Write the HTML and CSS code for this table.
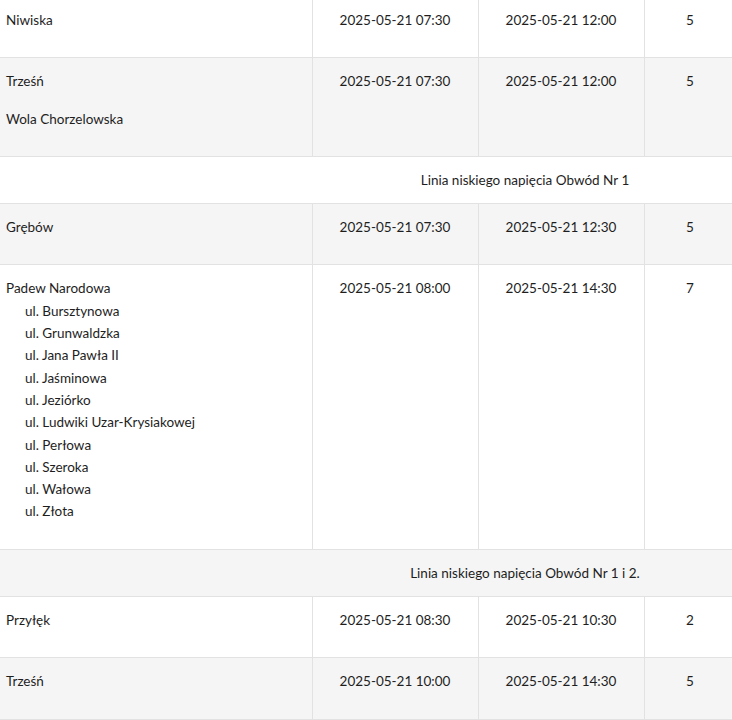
FILE: index.html
```html
<!DOCTYPE html>
<html lang="pl">
<head>
<meta charset="utf-8">
<title>Wyłączenia</title>
<link rel="stylesheet" href="styles.css">
</head>
<body>
<table class="outages">
  <colgroup>
    <col class="c-place">
    <col class="c-time">
    <col class="c-time">
    <col class="c-num">
    <col class="c-extra">
  </colgroup>
  <tbody>
    <tr class="row">
      <td class="place"><p>Niwiska</p></td>
      <td class="cell">2025-05-21 07:30</td>
      <td class="cell">2025-05-21 12:00</td>
      <td class="cell">5</td>
      <td class="cell"></td>
    </tr>
    <tr class="row alt">
      <td class="place"><p>Trześń</p><p>Wola Chorzelowska</p></td>
      <td class="cell">2025-05-21 07:30</td>
      <td class="cell">2025-05-21 12:00</td>
      <td class="cell">5</td>
      <td class="cell"></td>
    </tr>
    <tr class="row section">
      <td class="section-title" colspan="5">Linia niskiego napięcia Obwód Nr 1</td>
    </tr>
    <tr class="row alt">
      <td class="place"><p>Grębów</p></td>
      <td class="cell">2025-05-21 07:30</td>
      <td class="cell">2025-05-21 12:30</td>
      <td class="cell">5</td>
      <td class="cell"></td>
    </tr>
    <tr class="row">
      <td class="place">
        <p>Padew Narodowa
          <span class="street">ul. Bursztynowa</span>
          <span class="street">ul. Grunwaldzka</span>
          <span class="street">ul. Jana Pawła II</span>
          <span class="street">ul. Jaśminowa</span>
          <span class="street">ul. Jeziórko</span>
          <span class="street">ul. Ludwiki Uzar-Krysiakowej</span>
          <span class="street">ul. Perłowa</span>
          <span class="street">ul. Szeroka</span>
          <span class="street">ul. Wałowa</span>
          <span class="street">ul. Złota</span>
        </p>
      </td>
      <td class="cell">2025-05-21 08:00</td>
      <td class="cell">2025-05-21 14:30</td>
      <td class="cell">7</td>
      <td class="cell"></td>
    </tr>
    <tr class="row section alt">
      <td class="section-title" colspan="5">Linia niskiego napięcia Obwód Nr 1 i 2.</td>
    </tr>
    <tr class="row">
      <td class="place"><p>Przyłęk</p></td>
      <td class="cell">2025-05-21 08:30</td>
      <td class="cell">2025-05-21 10:30</td>
      <td class="cell">2</td>
      <td class="cell"></td>
    </tr>
    <tr class="row alt">
      <td class="place"><p>Trześń</p></td>
      <td class="cell">2025-05-21 10:00</td>
      <td class="cell">2025-05-21 14:30</td>
      <td class="cell">5</td>
      <td class="cell"></td>
    </tr>
  </tbody>
</table>
</body>
</html>
```

FILE: styles.css
```css
html, body {
  margin: 0;
  padding: 0;
  overflow: hidden;
  background: #ffffff;
}

body {
  font-family: Lato, "Open Sans", "Noto Sans", sans-serif;
  font-size: 13.5px;
  line-height: 22.3px;
  color: #1e1e1e;
}

.outages {
  width: 1050px;
  table-layout: fixed;
  border-collapse: collapse;
  margin-top: -4px;
}

.c-place { width: 312px; }
.c-time { width: 166px; }
.c-num { width: 92px; }
.c-extra { width: 314px; }

.row {
  background: #ffffff;
  border-top: 1px solid #e2e2e2;
  border-bottom: 1px solid #e2e2e2;
}

.row.alt {
  background: #f5f5f5;
}

.place,
.cell {
  vertical-align: top;
  padding: 12px 6px 11px;
  border-right: 1px solid #e2e2e2;
}

.cell {
  text-align: center;
}

.place p {
  margin: 0 0 15px;
}

.street {
  display: block;
  padding-left: 19px;
}

.section-title {
  padding: 12px 6px;
  text-align: center;
}
```
